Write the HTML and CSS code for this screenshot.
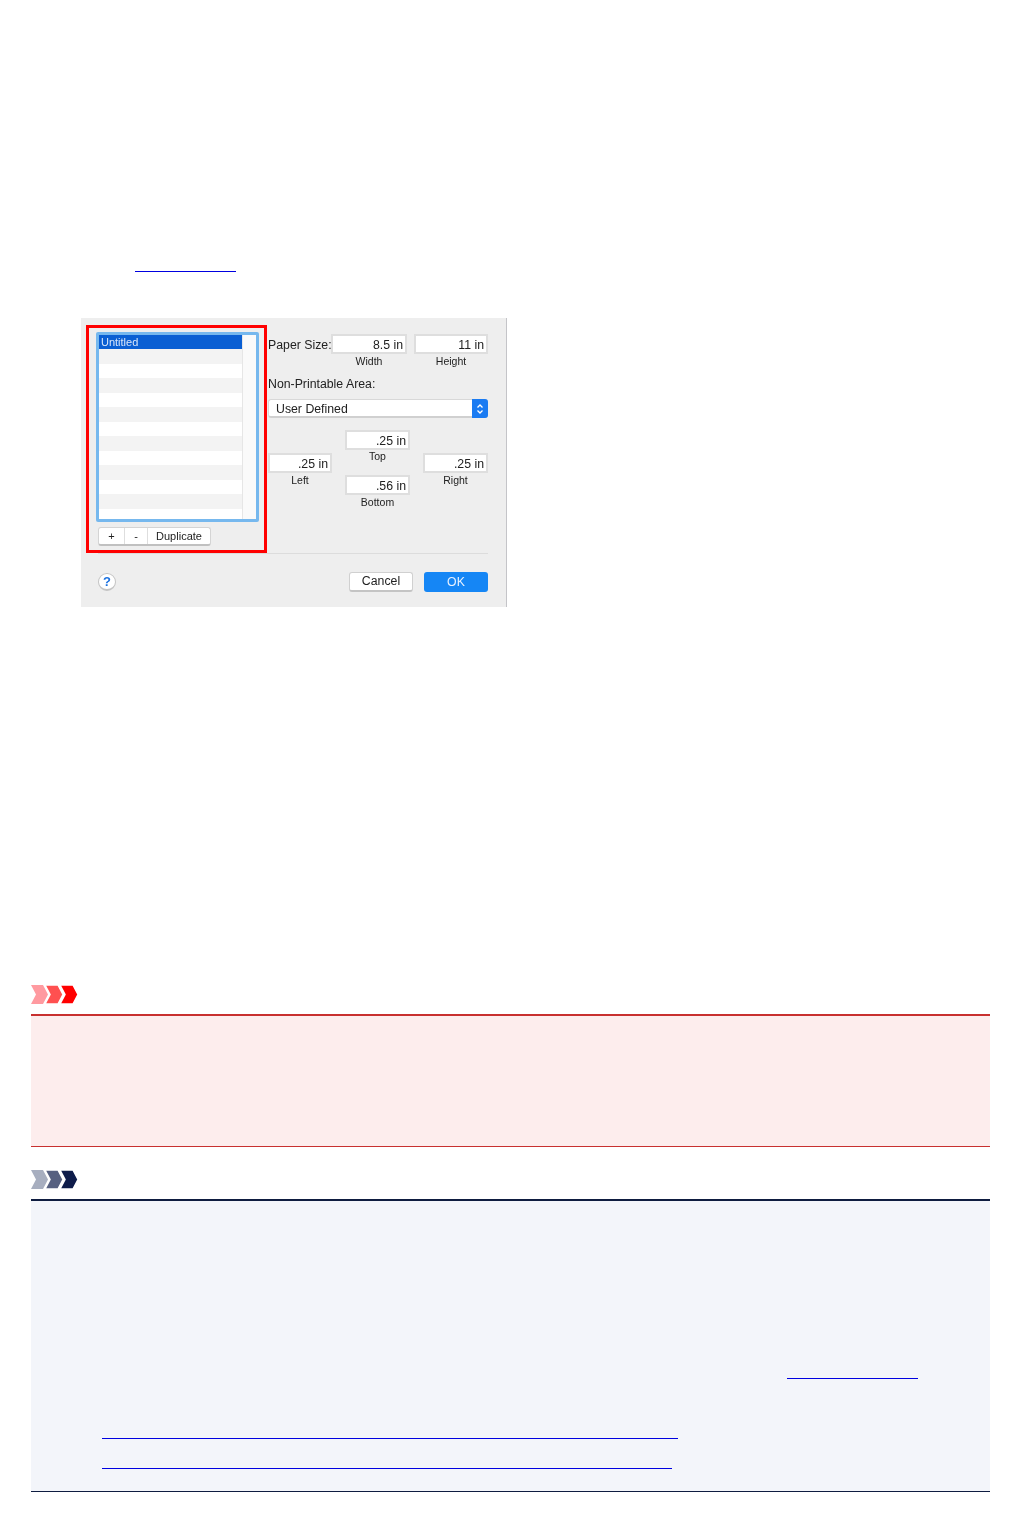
FILE: index.html
```html
<!DOCTYPE html>
<html lang="en">
<head>
  <meta charset="UTF-8">
  <meta name="viewport" content="width=device-width, initial-scale=1.0">
  <title>Custom Paper Sizes</title>
  <link rel="stylesheet" href="styles.css">
</head>
<body>
  <a class="link link-top" href="#"></a>

  <div class="dialog">
    <div class="dialog-top">
      <div class="marked">
        <div class="list">
          <div class="rows">
            <div class="row selected">Untitled</div>
            <div class="row"></div>
            <div class="row"></div>
            <div class="row"></div>
            <div class="row"></div>
            <div class="row"></div>
            <div class="row"></div>
            <div class="row"></div>
            <div class="row"></div>
            <div class="row"></div>
            <div class="row"></div>
            <div class="row"></div>
            <div class="row"></div>
          </div>
          <div class="scroll"></div>
        </div>
        <div class="list-buttons">
          <span class="lb lb-plus">+</span>
          <span class="lb lb-minus">-</span>
          <span class="lb lb-dup">Duplicate</span>
        </div>
      </div>

      <div class="settings">
        <div class="paper-size">
          <span class="label paper-label">Paper Size:</span>
          <div class="field-wrap width-wrap">
            <div class="field">8.5 in</div>
            <div class="small">Width</div>
          </div>
          <div class="field-wrap height-wrap">
            <div class="field">11 in</div>
            <div class="small">Height</div>
          </div>
        </div>
        <div class="label area-label">Non-Printable Area:</div>
        <div class="select">
          <span>User Defined</span>
          <span class="stepper">
            <svg width="8" height="12" viewBox="0 0 8 12"><path d="M1.5 4.5 4 2l2.5 2.5M1.5 7.5 4 10l2.5-2.5" fill="none" stroke="#fff" stroke-width="1.3"/></svg>
          </span>
        </div>
        <div class="margins">
          <div class="field-wrap side side-left">
            <div class="field">.25 in</div>
            <div class="small">Left</div>
          </div>
          <div class="middle">
            <div class="field-wrap">
              <div class="field">.25 in</div>
              <div class="small small-top">Top</div>
            </div>
            <div class="field-wrap">
              <div class="field">.56 in</div>
              <div class="small">Bottom</div>
            </div>
          </div>
          <div class="field-wrap side">
            <div class="field">.25 in</div>
            <div class="small">Right</div>
          </div>
        </div>
      </div>
    </div>

    <div class="divider"></div>

    <div class="dialog-bottom">
      <span class="help">?</span>
      <span class="btn cancel">Cancel</span>
      <span class="btn ok">OK</span>
    </div>
  </div>

  <div class="notice-title important-title">
    <svg width="48" height="19" viewBox="0 0 48 19">
      <path d="M0 0h12l5 9.5L12 19H0l5-9.5z" fill="#ff9aa0"/>
      <path class="chevron" d="M14 0h13l5 9.5L27 19H14l5-9.5z" fill="#ff5050"/>
      <path class="chevron" d="M29 0h13l5 9.5L42 19H29l5-9.5z" fill="#ff0000"/>
    </svg>
  </div>
  <div class="notice important"></div>

  <div class="notice-title note-title">
    <svg width="48" height="19" viewBox="0 0 48 19">
      <path d="M0 0h12l5 9.5L12 19H0l5-9.5z" fill="#a7aebf"/>
      <path class="chevron" d="M14 0h13l5 9.5L27 19H14l5-9.5z" fill="#566080"/>
      <path class="chevron" d="M29 0h13l5 9.5L42 19H29l5-9.5z" fill="#0e1c4a"/>
    </svg>
  </div>
  <div class="notice note">
    <a class="link link-note" href="#"></a>
    <a class="link link-a" href="#"></a>
    <a class="link link-b" href="#"></a>
  </div>
</body>
</html>
```

FILE: styles.css
```css
body {
  margin: 0;
  padding: 0 31px;
  background: white;
  font-family: "Liberation Sans", Arial, sans-serif;
  color: #222;
}

.link {
  display: block;
  height: 1px;
  background-color: #0000e0;
}

.link-top {
  width: 101px;
  margin-left: 104px;
  margin-top: 271px;
}

/* dialog picture */
.dialog {
  box-sizing: border-box;
  width: 426px;
  height: 289px;
  margin-top: 46px;
  margin-bottom: 378px;
  margin-left: 50px;
  padding: 7px 0 0 5px;
  background-color: #eeeeee;
  border-right: 1px solid #c4c4c8;
  filter: blur(0.5px);
}

.dialog-top {
  display: flex;
  height: 228px;
}

.marked {
  box-sizing: border-box;
  width: 181px;
  height: 228px;
  padding: 4px 0 0 7px;
  border: 3px solid #ff0000;
}

.list {
  box-sizing: border-box;
  display: flex;
  width: 163px;
  height: 190px;
  border: 3px solid #76b8ee;
  border-radius: 2px;
  background-color: white;
}

.rows {
  width: 143px;
  overflow: hidden;
}

.row {
  box-sizing: border-box;
  height: 14.5px;
  padding-left: 2px;
  font-size: 11px;
  line-height: 14px;
}

.row:nth-child(even) {
  background-color: #f3f3f3;
}

.row.selected {
  height: 14px;
  background-color: #0a5fd3;
  color: #d8e6fa;
}

.scroll {
  flex: 1;
  background-color: #fafafa;
  border-left: 1px solid #e6e6e6;
}

.list-buttons {
  box-sizing: border-box;
  display: flex;
  width: 113px;
  height: 19px;
  margin: 5px 0 0 2px;
  background-color: white;
  border: 1px solid #d4d4d4;
  border-bottom: 2px solid #c0c0c0;
  border-radius: 3px;
  font-size: 11px;
  line-height: 17px;
  text-align: center;
}

.lb {
  border-right: 1px solid #dedede;
}

.lb-plus {
  width: 25px;
}

.lb-minus {
  width: 22px;
}

.lb-dup {
  flex: 1;
  border-right: 0;
}

.settings {
  width: 220px;
  margin-left: 1px;
  font-size: 12.3px;
}

.label {
  line-height: 14px;
}

.paper-size {
  display: flex;
  margin-top: 9px;
}

.paper-label {
  width: 63px;
  padding-top: 4px;
  white-space: nowrap;
}

.field-wrap {
  text-align: center;
}

.field {
  box-sizing: border-box;
  height: 20px;
  padding-right: 2px;
  background-color: white;
  border: 2px solid #dedede;
  font-size: 12.3px;
  line-height: 18px;
  text-align: right;
}

.small {
  font-size: 10.5px;
  line-height: 14px;
}

.width-wrap {
  width: 76px;
}

.height-wrap {
  width: 74px;
  margin-left: 7px;
}

.area-label {
  margin-top: 9px;
}

.select {
  box-sizing: border-box;
  display: flex;
  justify-content: space-between;
  height: 19px;
  margin-top: 8px;
  padding-left: 7px;
  background-color: white;
  border: 1px solid #d8d8d8;
  border-bottom: 2px solid #d0d0d0;
  border-right: 0;
  border-radius: 3px;
  line-height: 18px;
}

.stepper {
  display: flex;
  align-items: center;
  justify-content: center;
  width: 16px;
  margin-top: -1px;
  margin-bottom: -2px;
  background-color: #1a7bf2;
  border-radius: 0 3px 3px 0;
}

.margins {
  display: flex;
  justify-content: space-between;
  margin-top: 12px;
}

.side {
  width: 65px;
  margin-top: 23px;
}

.side-left {
  width: 64px;
}

.middle {
  width: 65px;
}

.small-top {
  margin-bottom: 12px;
  line-height: 13px;
}

.divider {
  width: 390px;
  height: 1px;
  margin-left: 12px;
  background-color: #dcdcdc;
}

.dialog-bottom {
  display: flex;
  align-items: center;
  width: 390px;
  height: 20px;
  margin-top: 18px;
  margin-left: 12px;
}

.help {
  box-sizing: border-box;
  width: 18px;
  height: 18px;
  margin-right: 233px;
  background-color: white;
  border: 1px solid #c4c4c4;
  border-bottom-width: 2px;
  border-radius: 50%;
  color: #1c72e0;
  font-size: 13px;
  font-weight: bold;
  line-height: 15px;
  text-align: center;
}

.btn {
  box-sizing: border-box;
  width: 64px;
  height: 20px;
  border-radius: 3px;
  font-size: 12.3px;
  line-height: 19px;
  text-align: center;
}

.cancel {
  margin-right: 11px;
  background-color: white;
  border: 1px solid #d0d0d0;
  border-bottom: 2px solid #c4c4c4;
  line-height: 17px;
}

.ok {
  background-color: #1586f5;
  color: #e8f2ff;
  line-height: 20px;
}

/* notices */
.notice-title {
  height: 19px;
}

.notice-title svg {
  display: block;
}

.chevron {
  stroke: white;
  stroke-width: 1.5;
}

.note-title {
  margin-top: 23px;
}

.notice {
  box-sizing: border-box;
  margin-top: 10px;
  width: 959px;
}

.important {
  height: 133px;
  background-color: #fdeded;
  border-top: 2px solid #c8302f;
  border-bottom: 1px solid #c8302f;
}

.note {
  height: 293px;
  padding-top: 177px;
  background-color: #f3f5fa;
  border-top: 2px solid #0e1c40;
  border-bottom: 1px solid #0e1c40;
}

.link-note {
  width: 131px;
  margin-left: 756px;
}

.link-a {
  width: 576px;
  margin-top: 59px;
  margin-left: 71px;
}

.link-b {
  width: 570px;
  margin-top: 29px;
  margin-left: 71px;
}
```
